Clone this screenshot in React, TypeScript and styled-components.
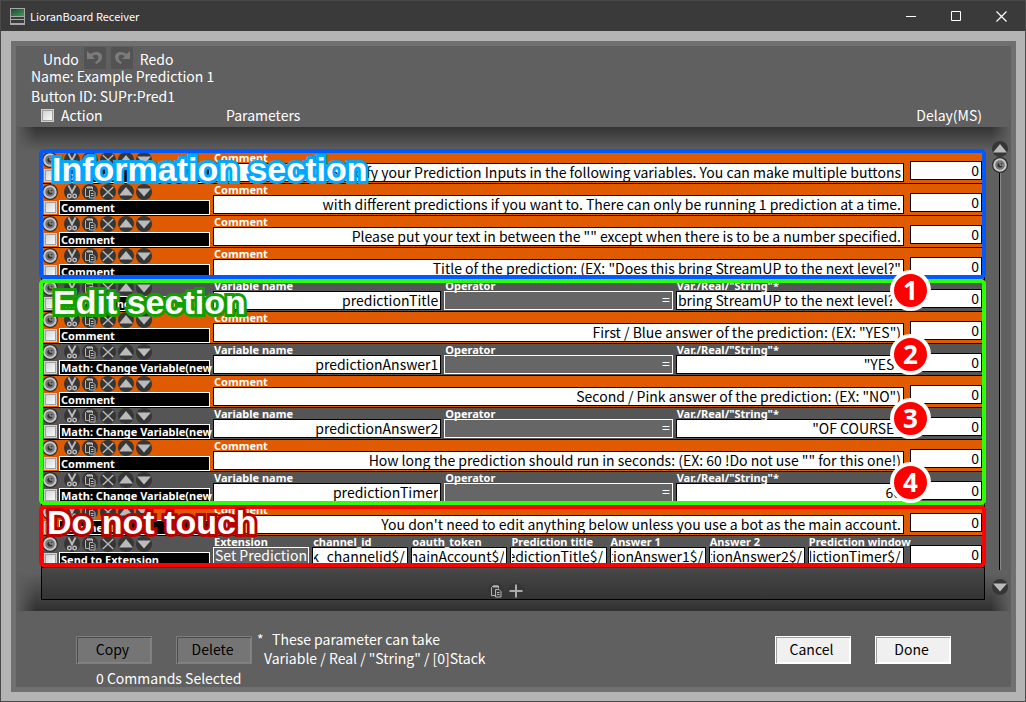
import React, { useLayoutEffect, useRef } from "react";
import styled, { createGlobalStyle, css } from "styled-components";

const ui = `"Noto Sans CJK SC", "Noto Sans", sans-serif`;
const labelFont = `"Noto Sans", "Open Sans", sans-serif`;

const GlobalStyle = createGlobalStyle`
  *, *::before, *::after { box-sizing: border-box; }
  body { margin: 0; background: #606060; }
  button, input { font: inherit; margin: 0; }
`;

const Window = styled.div`
  display: flex;
  flex-direction: column;
  min-height: 100vh;
  background: #b4b4b4;
  border: 1px solid #4a4a4a;
  border-top-width: 0;
  color: #fff;
  font: 14px/16px ${ui};
`;

const TitleBar = styled.header`
  display: flex;
  align-items: center;
  height: 31px;
  padding: 0 18px 0 9px;
  background: #3a3a3a;
  border-top: 1px solid #4a4a4a;
`;

const AppTitle = styled.h1`
  flex: 1;
  margin: 0 0 0 5px;
  font: 400 11px/16px "Noto Sans CJK SC", sans-serif;
`;

const WindowButton = styled.button`
  display: flex;
  padding: 0;
  margin-left: 34px;
  background: none;
  border: 0;
  color: #fff;
`;

const Panel = styled.main`
  flex: 1;
  display: flex;
  flex-direction: column;
  margin: 10px 9px 9px 10px;
  border: 5px solid #707070;
  background: #606060;
`;

const UndoRow = styled.div`
  display: flex;
  align-items: flex-start;
  gap: 5px;
  height: 22px;
  padding: 1px 0 0 27px;
`;

const HistoryButton = styled.button`
  display: flex;
  width: 22px;
  height: 22px;
  padding: 0;
  background: #535353;
  border: 0;
  color: #7c7c7c;
`;

const HistoryLabel = styled.span`
  line-height: 22px;
  padding-top: 1px;
  &:last-child { padding-left: 2px; }
`;

const Info = styled.div`
  display: grid;
  gap: 4px;
  padding-left: 15px;
`;

const InfoLine = styled.div`
  line-height: 16px;
`;

const ColumnHeads = styled.div`
  display: grid;
  grid-template-columns: 185px 1fr auto;
  padding: 3px 29px 4px 25px;
`;

const CheckLabel = styled.label`
  display: flex;
  align-items: center;
  gap: 7px;
`;

const Check = styled.input.attrs({ type: "checkbox" })`
  appearance: none;
  flex: none;
  width: 13px;
  height: 13px;
  border: 2px solid #a0a0a0;
  outline: 1px solid #d0d0d0;
  outline-offset: -1px;
  background: linear-gradient(135deg, #cfd2d6, #fbfbfb);
`;

const Well = styled.div`
  position: relative;
  display: grid;
  grid-template-columns: minmax(0, 1fr) 26px;
  padding-left: 25px;
  &::before, &::after {
    content: "";
    position: absolute;
    left: 0;
    right: 0;
    mask-image: linear-gradient(to right, transparent, #000 20px, #000 calc(100% - 20px), transparent);
  }
  &::before {
    top: 0;
    height: 24px;
    background: linear-gradient(#333, #606060);
  }
  &::after {
    bottom: 0;
    height: 38px;
    background: linear-gradient(#606060, #303030);
  }
`;

const List = styled.div`
  position: relative;
  z-index: 1;
  margin: 24px 0 11px;
  border: solid #000;
  border-width: 0 1px;
`;

const Section = styled.section`
  position: relative;
`;

const SectionFrame = styled.div<{ $color: string; $top: number; $bottom: number }>`
  position: absolute;
  z-index: 2;
  inset: ${(p) => p.$top}px -2px ${(p) => p.$bottom}px -3px;
  border: 4px solid ${(p) => p.$color};
  border-radius: 5px;
  pointer-events: none;
`;

const SectionTitle = styled.h2<{ $stroke: string; $x: number; $y: number }>`
  position: absolute;
  z-index: 3;
  left: ${(p) => p.$x}px;
  top: ${(p) => p.$y}px;
  margin: 0;
  font: 700 34px/34px "Liberation Sans", Arial, sans-serif;
  white-space: nowrap;
  -webkit-text-stroke: 6px ${(p) => p.$stroke};
  paint-order: stroke fill;
  stroke-linejoin: round;
`;

const Row = styled.div<{ $comment: boolean }>`
  position: relative;
  display: grid;
  grid-template-columns: 171px minmax(0, 1fr) 72px;
  height: 32px;
  padding-right: 2px;
  border-top: 1px solid #000;
  background: ${(p) => (p.$comment ? "#e05a00" : "#555")};
`;

const ActionCell = styled.div`
  overflow: hidden;
`;

const IconButton = styled.button`
  display: flex;
  width: 16px;
  height: 16px;
  padding: 0;
  background: none;
  border: 0;
`;

const IconRow = styled.div`
  display: flex;
  gap: 2px;
  ${IconButton}:first-child { margin-right: 4px; }
`;

const NameRow = styled.label`
  display: flex;
  align-items: center;
  gap: 2px;
  height: 15px;
  padding-left: 2px;
`;

const ActionName = styled.span`
  width: 151px;
  height: 15px;
  padding-left: 1px;
  background: #000;
  border: 1px solid #fff;
  font: 700 11px/13px ${labelFont};
  white-space: nowrap;
`;

const Fields = styled.div<{ $count: number }>`
  display: grid;
  grid-template-columns: repeat(${(p) => p.$count}, minmax(0, 1fr));
  column-gap: 3px;
  margin-right: 6px;
`;

const FieldLabel = styled.label`
  display: block;
  min-width: 0;
`;

const FieldName = styled.span`
  display: block;
  height: 11px;
  padding-left: 1px;
  font: 700 11px/11px ${labelFont};
  white-space: nowrap;
`;

const fieldBox = css`
  display: block;
  width: 100%;
  height: 19px;
  padding: 0 2px 2px 1px;
  border-radius: 0;
  font: 14px/15px ${ui};
  text-align: right;
`;

const TextInput = styled.input`
  ${fieldBox}
  background: #fff;
  border: 1px solid #000;
  color: #000;
`;

const ChoiceButton = styled.button`
  ${fieldBox}
  background: #666;
  border: 1px solid #fff;
  color: #fff;
  white-space: nowrap;
`;

const DelayCell = styled.div`
  padding-top: 9px;
`;

const Badge = styled.span`
  position: absolute;
  z-index: 4;
  top: -10px;
  right: 53px;
  width: 41px;
  height: 41px;
  border: 4px solid #fff;
  border-radius: 50%;
  background: #f00;
  font: 700 26px/33px "Open Sans", sans-serif;
  text-align: center;
`;

const AddRow = styled.div`
  display: flex;
  align-items: flex-end;
  justify-content: center;
  gap: 4px;
  height: 33px;
  padding-right: 14px;
  border: solid #000;
  border-width: 1px 0;
  background: linear-gradient(#484848, #333);
`;

const Scroller = styled.div`
  position: relative;
  z-index: 1;
  display: flex;
  flex-direction: column;
  align-items: center;
  padding: 14px 3px 16px 7px;
`;

const Track = styled.div`
  flex: 1;
  width: 2px;
  margin-bottom: 9px;
  background: #000;
  border-right: 1px solid #8a8a8a;
`;

const Footer = styled.footer`
  display: flex;
  align-items: flex-start;
  padding: 19px 60px 0;
`;

const Buttons = styled.div`
  display: flex;
  gap: 24px;
  padding-top: 6px;
`;

const Status = styled.div`
  padding: 6px 0 0 20px;
`;

const PushButton = styled.button<{ $muted?: boolean }>`
  width: 76px;
  height: 28px;
  padding: 0 3px 2px 0;
  color: #000;
  font: 14px/22px ${ui};
  border-radius: 0;
  ${(p) =>
    p.$muted
      ? css`
          background: #757575;
          border: 1px solid #7e7e7e;
          box-shadow: inset 1px 1px #4c4c4c, inset -1px -1px #858585;
        `
      : css`
          background: #f0f0f0;
          border: 1px solid #fff;
          box-shadow: inset 1px 1px #a0a0a0, inset -1px -1px #fff;
        `}
`;

const Note = styled.p`
  flex: 1;
  margin: 0 0 0 5px;
  line-height: 19px;
  span { display: inline-block; width: 15px; }
  em { display: block; padding-left: 7px; font-style: normal; }
`;

const Disc = () => <circle cx="8" cy="8" r="8" fill="#363636" />;

const icons = {
  Timer: (
    <>
      <circle cx="8" cy="8" r="8" fill="#2c2c2c" />
      <circle cx="8" cy="8" r="5.8" fill="#777" stroke="#c8c8c8" strokeWidth="2" />
      <circle cx="8" cy="8" r="2.6" fill="#333" />
      <path d="M8 8h3M8 8V5" stroke="#aaa" strokeWidth="1" />
    </>
  ),
  Cut: (
    <>
      <Disc />
      <path d="M4.5 1.5 8.6 9.500M11.5 1.5 7.4 9.500" stroke="#bbb" strokeWidth="1.8" fill="none" />
      <circle cx="5.4" cy="12" r="1.8" stroke="#bbb" strokeWidth="1.4" fill="none" />
      <circle cx="10.6" cy="12" r="1.8" stroke="#bbb" strokeWidth="1.4" fill="none" />
    </>
  ),
  Copy: (
    <>
      <Disc />
      <path d="M7 12.5H3.500V4.500L5 3h5.500v2.500" stroke="#b4b4b4" fill="none" />
      <path d="M5 3.500h5" stroke="#b4b4b4" strokeWidth="2" />
      <path d="M7.500 6.500h3.500l2 2v5.500H7.500z" fill="#3a3a3a" stroke="#b4b4b4" />
      <path d="M9 9.500h2.500M9 11.500h2.500" stroke="#b4b4b4" />
    </>
  ),
  Remove: (
    <>
      <Disc />
      <path d="M2.700 3 13.300 13M13.300 3 2.700 13" stroke="#b8b8b8" strokeWidth="1.400" />
    </>
  ),
  "Move up": (
    <>
      <Disc />
      <path d="M8 3 15 11.500H1z" fill="#bababa" />
    </>
  ),
  "Move down": (
    <>
      <Disc />
      <path d="M8 12.500 15 4.500H1z" fill="#bababa" />
    </>
  ),
  Add: (
    <>
      <Disc />
      <path d="M8 1.500v13M1.500 8h13" stroke="#aaa" strokeWidth="2" />
    </>
  ),
};

type IconName = keyof typeof icons;

const Icon = ({ name }: { name: IconName }) => (
  <IconButton aria-label={name}>
    <svg width="16" height="16" viewBox="0 0 16 16">
      {icons[name]}
    </svg>
  </IconButton>
);

/* Keeps the end of a long value in view. */
const ValueInput = (props: React.InputHTMLAttributes<HTMLInputElement>) => {
  const ref = useRef<HTMLInputElement>(null);
  useLayoutEffect(() => {
    if (ref.current) ref.current.scrollLeft = ref.current.scrollWidth;
  }, []);
  return <TextInput ref={ref} {...props} />;
};

type Field = { label: string; value: string; choice?: boolean };
type Command = { name: string; fields: Field[]; badge?: number };

const comment = (value: string): Command => ({ name: "Comment", fields: [{ label: "Comment", value }] });

const math = (variable: string, value: string, badge: number): Command => ({
  name: "Math: Change Variable(new",
  badge,
  fields: [
    { label: "Variable name", value: variable },
    { label: "Operator", value: "=", choice: true },
    { label: 'Var./Real/"String"*', value },
  ],
});

const sections: {
  title: string;
  color: string;
  stroke: string;
  top: number;
  bottom: number;
  x: number;
  y: number;
  commands: Command[];
}[] = [
  {
    title: "Information section",
    color: "#0058ff",
    stroke: "#00a8ff",
    top: -2,
    bottom: 0,
    x: 10,
    y: 1,
    commands: [
      comment("Specify your Prediction Inputs in the following variables. You can make multiple buttons"),
      comment("with different predictions if you want to. There can only be running 1 prediction at a time."),
      comment('Please put your text in between the "" except when there is to be a number specified.'),
      comment('Title of the prediction: (EX: "Does this bring StreamUP to the next level?"'),
    ],
  },
  {
    title: "Edit section",
    color: "#2bff00",
    stroke: "#12a000",
    top: 0,
    bottom: -2,
    x: 11,
    y: 6,
    commands: [
      math("predictionTitle", 'bring StreamUP to the next level?"', 1),
      comment('First / Blue answer of the prediction: (EX: "YES")'),
      math("predictionAnswer1", '"YES"', 2),
      comment('Second / Pink answer of the prediction: (EX: "NO")'),
      math("predictionAnswer2", '"OF COURSE"', 3),
      comment('How long the prediction should run in seconds: (EX: 60 !Do not use "" for this one!)'),
      math("predictionTimer", "60", 4),
    ],
  },
  {
    title: "Do not touch",
    color: "#f00",
    stroke: "#b80000",
    top: 2,
    bottom: 0,
    x: 5,
    y: 2,
    commands: [
      comment("You don't need to edit anything below unless you use a bot as the main account."),
      {
        name: "Send to Extension",
        fields: [
          { label: "Extension", value: "Set Prediction", choice: true },
          { label: "channel_id", value: "k_channelid$/" },
          { label: "oauth_token", value: "mainAccount$/" },
          { label: "Prediction title", value: "predictionTitle$/" },
          { label: "Answer 1", value: "predictionAnswer1$/" },
          { label: "Answer 2", value: "predictionAnswer2$/" },
          { label: "Prediction window", value: "predictionTimer$/" },
        ],
      },
    ],
  },
];

const CommandRow = ({ command }: { command: Command }) => (
  <Row $comment={command.name === "Comment"}>
    <ActionCell>
      <IconRow>
        <Icon name="Timer" />
        <Icon name="Cut" />
        <Icon name="Copy" />
        <Icon name="Remove" />
        <Icon name="Move up" />
        <Icon name="Move down" />
      </IconRow>
      <NameRow>
        <Check />
        <ActionName>{command.name}</ActionName>
      </NameRow>
    </ActionCell>
    <Fields $count={command.fields.length}>
      {command.fields.map((f) => (
        <FieldLabel key={f.label}>
          <FieldName>{f.label}</FieldName>
          {f.choice ? <ChoiceButton>{f.value}</ChoiceButton> : <ValueInput defaultValue={f.value} />}
        </FieldLabel>
      ))}
    </Fields>
    <DelayCell>
      <TextInput aria-label="Delay in milliseconds" defaultValue="0" />
    </DelayCell>
    {command.badge && <Badge>{command.badge}</Badge>}
  </Row>
);

export default function App() {
  return (
    <Window>
      <GlobalStyle />
      <TitleBar>
        <svg width="15" height="17" viewBox="0 0 15 17">
          <defs>
            <linearGradient id="logo" x1="0" y1="0" x2="1" y2="1">
              <stop offset="0" stopColor="#1d4a2c" />
              <stop offset="1" stopColor="#3f9a5c" />
            </linearGradient>
          </defs>
          <path d="M0 0h15v17H0z" fill="#a8a8a8" />
          <path d="M1 1h13v7H1z" fill="url(#logo)" />
          <path d="M1 9h13v2H1zM1 12h13v3H1z" fill="#3c3c3c" />
        </svg>
        <AppTitle>LioranBoard Receiver</AppTitle>
        <WindowButton aria-label="Minimize">
          <svg width="11" height="11">
            <path d="M0 5.500h10" stroke="currentColor" />
          </svg>
        </WindowButton>
        <WindowButton aria-label="Maximize">
          <svg width="11" height="11">
            <path d="M.5.5h9v9h-9z" stroke="currentColor" fill="none" />
          </svg>
        </WindowButton>
        <WindowButton aria-label="Close">
          <svg width="11" height="11">
            <path d="M.5.5l10 10M10.500.5l-10 10" stroke="currentColor" strokeWidth="1.200" />
          </svg>
        </WindowButton>
      </TitleBar>
      <Panel>
        <UndoRow>
          <HistoryLabel>Undo</HistoryLabel>
          <HistoryButton aria-label="Undo">
            <svg width="22" height="22" viewBox="0 0 22 22">
              <path d="M3 4v8h8L8.300 9.300C11 7 14.500 7.500 14.500 10.500c0 2-1.200 3.500-3.500 5l1.500 1.500c3.500-2 5.500-4 5.500-7 0-5.500-7-6.500-11.500-3z" fill="currentColor" />
            </svg>
          </HistoryButton>
          <HistoryButton aria-label="Redo">
            <svg width="22" height="22" viewBox="0 0 22 22">
              <path d="M19 4v8h-8l2.700-2.700C11 7 7.500 7.500 7.500 10.500c0 2 1.200 3.500 3.500 5L9.500 17C6 15 4 13 4 10c0-5.500 7-6.500 11.500-3z" fill="currentColor" />
            </svg>
          </HistoryButton>
          <HistoryLabel>Redo</HistoryLabel>
        </UndoRow>
        <Info>
          <InfoLine>Name: Example Prediction 1</InfoLine>
          <InfoLine>Button ID: SUPr:Pred1</InfoLine>
        </Info>
        <ColumnHeads>
          <CheckLabel>
            <Check />
            Action
          </CheckLabel>
          <span>Parameters</span>
          <span>Delay(MS)</span>
        </ColumnHeads>
        <Well>
          <List>
            {sections.map((s) => (
              <Section key={s.title}>
                {s.commands.map((c, i) => (
                  <CommandRow key={i} command={c} />
                ))}
                <SectionFrame $color={s.color} $top={s.top} $bottom={s.bottom} />
                <SectionTitle $stroke={s.stroke} $x={s.x} $y={s.y}>
                  {s.title}
                </SectionTitle>
              </Section>
            ))}
            <AddRow>
              <Icon name="Copy" />
              <Icon name="Add" />
            </AddRow>
          </List>
          <Scroller>
            <Icon name="Move up" />
            <Icon name="Timer" />
            <Track />
            <Icon name="Move down" />
          </Scroller>
        </Well>
        <Footer>
          <div>
            <Buttons>
              <PushButton $muted>Copy</PushButton>
              <PushButton $muted>Delete</PushButton>
            </Buttons>
            <Status>0 Commands Selected</Status>
          </div>
          <Note>
            <span>*</span>These parameter can take
            <em>Variable / Real / "String" / [0]Stack</em>
          </Note>
          <Buttons>
            <PushButton>Cancel</PushButton>
            <PushButton>Done</PushButton>
          </Buttons>
        </Footer>
      </Panel>
    </Window>
  );
}
